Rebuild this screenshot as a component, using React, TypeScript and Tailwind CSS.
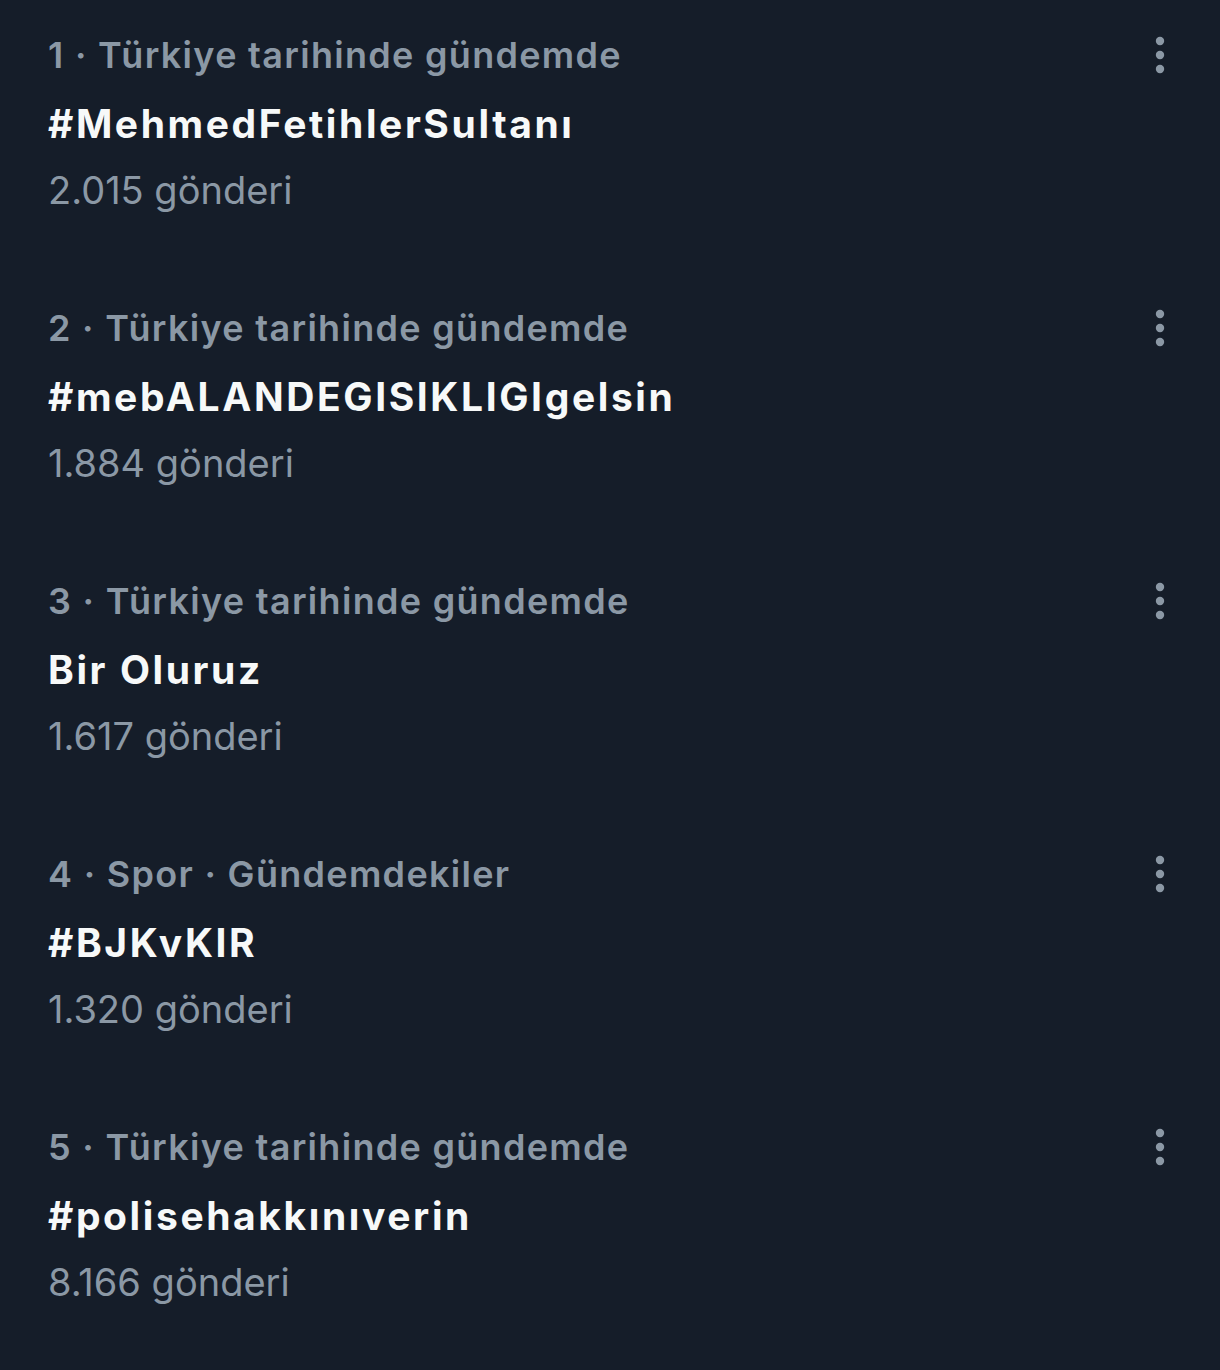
import React from 'react';

type Trend = {
  rank: number;
  context: string;
  title: string;
  posts: string;
};

const trends: Trend[] = [
  { rank: 1, context: 'Türkiye tarihinde gündemde', title: '#MehmedFetihlerSultanı', posts: '2.015 gönderi' },
  { rank: 2, context: 'Türkiye tarihinde gündemde', title: '#mebALANDEGISIKLIGIgelsin', posts: '1.884 gönderi' },
  { rank: 3, context: 'Türkiye tarihinde gündemde', title: 'Bir Oluruz', posts: '1.617 gönderi' },
  { rank: 4, context: 'Spor · Gündemdekiler', title: '#BJKvKIR', posts: '1.320 gönderi' },
  { rank: 5, context: 'Türkiye tarihinde gündemde', title: '#polisehakkınıverin', posts: '8.166 gönderi' },
];

const MoreIcon: React.FC = () => (
  <svg width="10" height="38" viewBox="0 0 10 38" className="text-[#8b98a5]" fill="currentColor">
    <circle cx="5" cy="5" r="4.2" />
    <circle cx="5" cy="19" r="4.2" />
    <circle cx="5" cy="33" r="4.2" />
  </svg>
);

const App: React.FC = () => {
  return (
    <div
      className="min-h-[1370px] w-full bg-[#151d29]"
      style={{ fontFamily: 'Inter, "Noto Sans", sans-serif' }}
    >
      {trends.map((t) => (
        <div key={t.rank} className="flex items-start justify-between pl-[48px] pr-[55px] pt-[31px] pb-[59px]">
          <div className="flex flex-col">
            <div className="text-[36px] leading-[48px] font-semibold tracking-[1.3px] text-[#8b98a5] whitespace-nowrap">
              {t.rank} · {t.context}
            </div>
            <div className="mt-[15px] text-[39px] leading-[60px] font-bold tracking-[2.6px] text-[#f7f9f9] whitespace-nowrap">
              {t.title}
            </div>
            <div className="mt-[12px] text-[38px] leading-[48px] text-[#8b98a5] whitespace-nowrap">
              {t.posts}
            </div>
          </div>
          <div className="pt-[5px]">
            <MoreIcon />
          </div>
        </div>
      ))}
    </div>
  );
};

export default App;
